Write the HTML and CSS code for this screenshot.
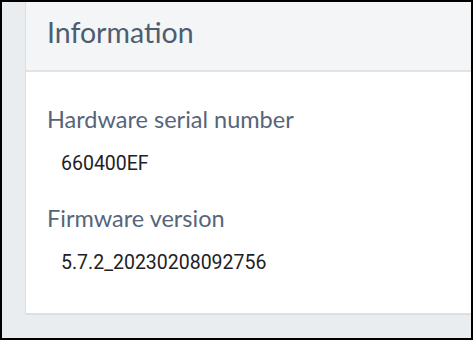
FILE: index.html
```html
<!DOCTYPE html>
<html lang="en">
<head>
  <meta charset="UTF-8" />
  <meta name="viewport" content="width=device-width, initial-scale=1.0"/>
  <title>Information</title>
  <link rel="stylesheet" href="styles.css">
</head>
<body>
  <div class="frame">
    <section class="card">
      <header class="card-header">
        <h1>Information</h1>
      </header>
      <div class="card-body">
        <div class="field">
          <h2>Hardware serial number</h2>
          <p>660400EF</p>
        </div>
        <div class="field">
          <h2>Firmware version</h2>
          <p>5.7.2_20230208092756</p>
        </div>
      </div>
    </section>
  </div>
</body>
</html>
```

FILE: styles.css
```css
* {margin: 0; padding: 0; box-sizing: border-box;}
body {
  background: #e9edf0;
  font-family: 'Lato', sans-serif;
}
.frame {
  width: 473px;
  height: 340px;
  border: 2px solid #000000;
  background-color: #e9edf0;
  padding-left: 23px;
  overflow: hidden;
}
.card {
  background-color: #ffffff;
  border-left: 1px solid #dcdfe2;
  border-bottom: 2px solid #dde0e3;
  height: 313px;
}
.card-header {
  background-color: #f4f5f7;
  border-bottom: 2px solid #e1e3e5;
  height: 70px;
  padding: 13px 0 0 21px;
}
.card-header h1 {
  font-weight: 400;
  font-size: 28.5px;
  line-height: 1.2;
  color: #4d5d70;
}
.card-body {
  padding: 33px 0 0 21px;
}
.field {
  margin-bottom: 29px;
}
.field h2 {
  font-weight: 400;
  font-size: 23.5px;
  line-height: 1.2;
  color: #56657a;
}
.field p {
  font-family: 'Roboto', sans-serif;
  font-size: 19.5px;
  color: #1e2125;
  padding: 19px 0 0 14px;
}
```
